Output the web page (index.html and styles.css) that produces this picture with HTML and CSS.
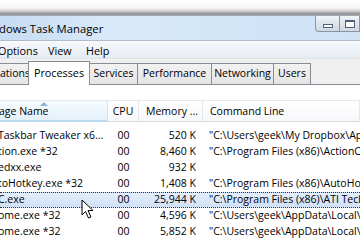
FILE: index.html
```html
<!DOCTYPE html>
<html>
<head>
<meta charset="utf-8">
<link rel="stylesheet" href="styles.css">
</head>
<body>
<div class="window">
  <div class="frame-top"></div>
  <div class="titlebar">
    <span class="title">dows Task Manager</span>
    <div class="buttons">
      <div class="wbtn min"><span class="min-glyph"></span></div>
      <div class="wbtn max"><span class="max-glyph"></span></div>
    </div>
  </div>
  <div class="menubar">
    <span class="menu m-options">Options</span>
    <span class="menu m-view">View</span>
    <span class="menu m-help">Help</span>
  </div>
  <div class="tabs">
    <div class="tab t-apps">ations</div>
    <div class="tab active">Processes</div>
    <div class="tab t-services">Services</div>
    <div class="tab t-perf">Performance</div>
    <div class="tab t-net">Networking</div>
    <div class="tab t-users">Users</div>
  </div>
  <div class="panel">
    <div class="list">
      <div class="header">
        <div class="hcell sorted"><span class="sort-arrow"></span><span class="first-text">age Name</span></div>
        <div class="hcell center">CPU</div>
        <div class="hcell">Memory ...</div>
        <div class="hcell">Command Line</div>
      </div>
      <div class="rows">
        <div class="row"><div class="cell name">Taskbar Tweaker x6...</div><div class="cell cpu">00</div><div class="cell mem">520 K</div><div class="cell cmd">"C:\Users\geek\My Dropbox\Apps\7+ Taskbar Tweaker</div></div>
        <div class="row"><div class="cell name">tion.exe *32</div><div class="cell cpu">00</div><div class="cell mem">8,460 K</div><div class="cell cmd">"C:\Program Files (x86)\ActionOutline\</div></div>
        <div class="row"><div class="cell name">edxx.exe</div><div class="cell cpu">00</div><div class="cell mem">932 K</div><div class="cell cmd"></div></div>
        <div class="row"><div class="cell name">toHotkey.exe *32</div><div class="cell cpu">00</div><div class="cell mem">1,408 K</div><div class="cell cmd">"C:\Program Files (x86)\AutoHotkey\</div></div>
        <div class="row selected"><div class="cell name">C.exe</div><div class="cell cpu">00</div><div class="cell mem">25,944 K</div><div class="cell cmd">"C:\Program Files (x86)\ATI Technologies\</div></div>
        <div class="row"><div class="cell name">ome.exe *32</div><div class="cell cpu">00</div><div class="cell mem">4,596 K</div><div class="cell cmd">"C:\Users\geek\AppData\Local\Google\</div></div>
        <div class="row"><div class="cell name">ome.exe *32</div><div class="cell cpu">00</div><div class="cell mem">5,852 K</div><div class="cell cmd">"C:\Users\geek\AppData\Local\Google\</div></div>
      </div>
    </div>
  </div>
  <svg class="cursor" width="14" height="21" viewBox="0 0 14 21">
    <path d="M1 1 L1 16 L4.5 12.5 L7.5 19 L10 18 L7 11.5 L12 11.5 Z" fill="#fff" stroke="#000" stroke-width="1" stroke-linejoin="miter"/>
  </svg>
</div>
</body>
</html>
```
FILE: styles.css
```css
* { box-sizing: border-box; }
html, body { margin: 0; padding: 0; }
body {
  width: 360px;
  height: 240px;
  overflow: hidden;
  background: #f0f0f0;
  font-family: "Open Sans", "Noto Sans", sans-serif;
  font-size: 10.5px;
  color: #000;
}
.window { position: relative; width: 360px; height: 240px; overflow: hidden; }
.frame-top {
  height: 16px;
  background: linear-gradient(to bottom, #ffffff 0px, #f6f6f6 8px, #d0d0d0 11px, #8e8e8e 14px, #a8b4c0 16px);
}
.titlebar {
  height: 25px;
  display: flex;
  align-items: flex-start;
  background: linear-gradient(to right, #c6dcf3 0%, #d8e9f9 30%, #d3e6f8 60%, #cfe2f6 100%);
  border-bottom: 1px solid #aebccb;
}
.title {
  font-size: 11.3px;
  line-height: 26px;
  margin-left: -1px;
  color: #000;
}
.buttons { margin-left: auto; display: flex; height: 16px; }
.wbtn {
  height: 16px;
  border: 1px solid #8a95a3;
  border-top: none;
  background: linear-gradient(to bottom, #f2f5f9, #dde4ec 50%, #d0d9e4);
  display: flex;
  align-items: center;
  justify-content: center;
}
.wbtn.min { width: 25px; border-bottom-left-radius: 4px; }
.wbtn.max { width: 20px; border-left: none; justify-content: flex-start; padding-left: 5px; }
.min-glyph {
  width: 10px; height: 4px;
  border: 1px solid #50607a;
  background: #fff;
  margin-top: 4px;
}
.max-glyph {
  width: 10px; height: 8px;
  border: 1px solid #50607a;
  border-top-width: 2px;
  background: #fff;
}
.menubar {
  height: 18px;
  display: flex;
  align-items: center;
  background: linear-gradient(to bottom, #f6f8fb, #e6ebf2);
  border-top: 1px solid #fafcfe;
  border-bottom: 1px solid #dfe4ea;
  font-size: 10.8px;
}
.menu.m-options { margin-left: -2px; width: 50px; }
.menu.m-view { width: 38px; }
.tabs {
  display: flex;
  align-items: flex-end;
  height: 26px;
  padding-top: 2px;
  border-bottom: 1px solid #898c95;
}
.tab {
  height: 21px;
  line-height: 19px;
  text-align: center;
  border: 1px solid #898c95;
  border-bottom: none;
  border-left: none;
  background: linear-gradient(to bottom, #f2f2f2, #e4e4e4);
  font-size: 10.5px;
  white-space: nowrap;
}
.tab.t-apps { width: 29px; text-align: left; padding-left: 0; }
.tab.t-services { width: 48px; }
.tab.t-perf { width: 74px; }
.tab.t-net { width: 62px; }
.tab.t-users { width: 37px; }
.tab.active {
  height: 24px;
  margin-bottom: -1px;
  margin-left: -1px;
  border-left: 1px solid #898c95;
  background: #fff;
  line-height: 21px;
  font-size: 10.8px;
  width: 62px;
}
.panel {
  background: #fff;
  padding-top: 15px;
  height: 156px;
}
.list { border-top: 1px solid #e3e8ee; }
.header {
  display: grid;
  grid-template-columns: 108px 31px 64px 1fr;
  height: 21px;
}
.hcell {
  position: relative;
  line-height: 21px;
  padding-left: 7px;
  border-right: 1px solid #e4e7ec;
  border-bottom: 1px solid #d6dbe3;
  background: linear-gradient(to bottom, #ffffff, #f7f8fa);
  white-space: nowrap;
  overflow: hidden;
  font-size: 10.5px;
}
.hcell.center { text-align: center; padding-left: 0; }
.hcell.sorted {
  padding-left: 0;
  background: linear-gradient(to bottom, #f6fbfe, #e4f1fb);
  border-right: 1px solid #cfe4f6;
  border-bottom: 2px solid #b9d9f1;
}
.first-text { margin-left: -1px; }
.sort-arrow {
  position: absolute;
  left: 40px;
  top: 1px;
  width: 0; height: 0;
  border-left: 4px solid transparent;
  border-right: 4px solid transparent;
  border-bottom: 4px solid #8fb3d3;
}
.rows { padding-top: 6px; }
.row {
  display: grid;
  grid-template-columns: 108px 31px 64px 1fr;
  height: 16px;
  line-height: 15px;
  white-space: nowrap;
  font-size: 10.5px;
}
.cell { overflow: hidden; }
.cell.name { margin-left: -2px; }
.cell.cpu { text-align: center; }
.cell.mem { text-align: right; padding-right: 7px; }
.cell.cmd { padding-left: 6px; }
.row.selected {
  background: linear-gradient(to bottom, #e4eefb, #cfe0f7);
  border-top: 1px dotted #333;
  border-bottom: 1px dotted #333;
  line-height: 13px;
}
.cursor { position: absolute; left: 81px; top: 199px; }
```
